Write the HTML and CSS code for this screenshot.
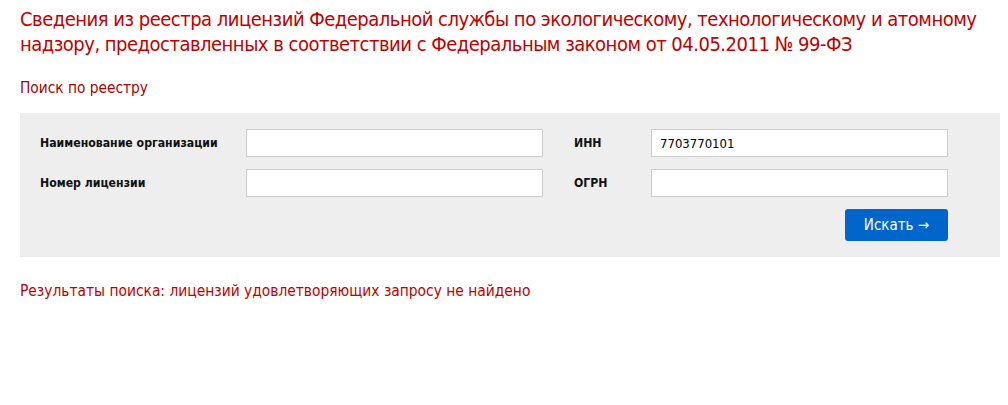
FILE: index.html
```html
<!DOCTYPE html>
<html lang="ru">
<head>
<meta charset="utf-8">
<title>Реестр лицензий</title>
<link rel="stylesheet" href="styles.css">
</head>
<body>
<div class="page">
  <h1 class="title">Сведения из реестра лицензий Федеральной службы по экологическому, технологическому и атомному надзору, предоставленных в соответствии с Федеральным законом от 04.05.2011 № 99-ФЗ</h1>
  <div class="subtitle">Поиск по реестру</div>
  <form class="search">
    <div class="grid">
      <label class="label">Наименование организации</label>
      <input class="field" type="text" value="">
      <label class="label label-right">ИНН</label>
      <input class="field" type="text" value="7703770101">
      <label class="label">Номер лицензии</label>
      <input class="field" type="text" value="">
      <label class="label label-right">ОГРН</label>
      <input class="field" type="text" value="">
      <div class="actions">
        <button class="btn" type="button">Искать →</button>
      </div>
    </div>
  </form>
  <div class="result">Результаты поиска: лицензий удовлетворяющих запросу не найдено</div>
</div>
</body>
</html>
```

FILE: styles.css
```css
html, body {
  margin: 0;
  padding: 0;
  background: #fff;
}
body {
  font-family: "DejaVu Sans Condensed", "DejaVu Sans", sans-serif;
  color: #000;
}
.page {
  padding: 7px 8px 0 20px;
}
.title {
  margin: 0;
  font-size: 20px;
  font-weight: normal;
  line-height: 25px;
  letter-spacing: -0.5px;
  color: #bf0000;
}
.subtitle {
  margin-top: 21px;
  font-size: 15.3px;
  line-height: 20px;
  color: #a80000;
}
.search {
  margin-top: 15px;
  background: #eeeeee;
  padding: 16px 52px 16px 20px;
}
.grid {
  display: grid;
  grid-template-columns: 206px 297px 108px 297px;
  grid-auto-rows: auto;
  row-gap: 12px;
  align-items: center;
}
.label {
  font-size: 12.2px;
  font-weight: bold;
  color: #111;
}
.label-right {
  padding-left: 31px;
}
.field {
  box-sizing: border-box;
  width: 297px;
  height: 28px;
  margin: 0;
  border: 1px solid #cccccc;
  background: #fff;
  padding: 0 8px;
  font-family: "DejaVu Sans Condensed", "DejaVu Sans", sans-serif;
  font-size: 13px;
  color: #000;
  outline: none;
}
.actions {
  grid-column: 1 / -1;
  display: flex;
  justify-content: flex-end;
}
.btn {
  width: 103px;
  height: 32px;
  border: 0;
  border-radius: 3px;
  background: #0066cc;
  color: #fff;
  font-family: "DejaVu Sans Condensed", "DejaVu Sans", sans-serif;
  font-size: 15px;
  padding: 0;
  cursor: pointer;
}
.result {
  margin-top: 24px;
  font-size: 15.4px;
  line-height: 20px;
  color: #bf0000;
}
```
